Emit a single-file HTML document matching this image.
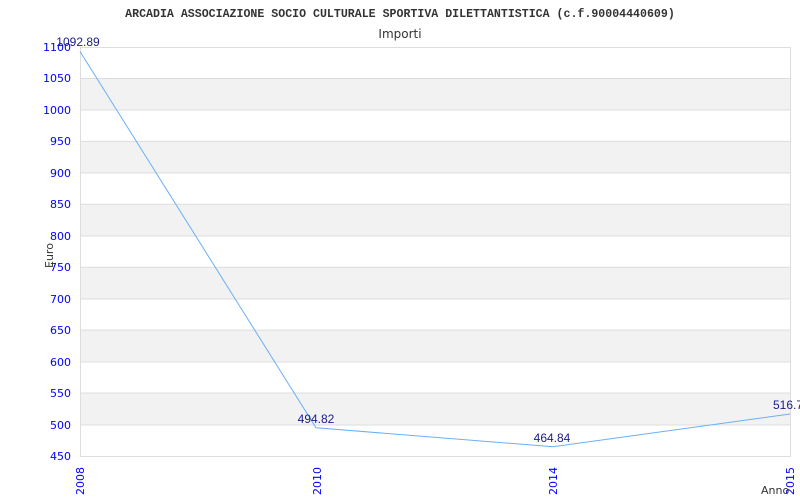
<!DOCTYPE html>
<html><head><style>body{margin:0;background:#fff}svg{display:block}</style></head><body>
<svg width="800" height="500" xmlns="http://www.w3.org/2000/svg">
<rect width="800" height="500" fill="#fff"/>
<text x="400" y="17" text-anchor="middle" font-family="Liberation Mono, monospace" font-weight="bold" font-size="11.6" fill="#333">ARCADIA ASSOCIAZIONE SOCIO CULTURALE SPORTIVA DILETTANTISTICA (c.f.90004440609)</text>
<text x="400" y="38" text-anchor="middle" font-family="DejaVu Sans, sans-serif" font-size="12" fill="#333">Importi</text>
<g fill="#f2f2f2">
<rect x="80" y="78.5" width="710" height="31.5"/>
<rect x="80" y="141.4" width="710" height="31.5"/>
<rect x="80" y="204.3" width="710" height="31.5"/>
<rect x="80" y="267.2" width="710" height="31.5"/>
<rect x="80" y="330.1" width="710" height="31.5"/>
<rect x="80" y="393" width="710" height="31.5"/>
</g>
<g stroke="#ddd" stroke-width="1">
<line x1="80" x2="790" y1="47.5" y2="47.5"/><line x1="80" x2="790" y1="78.5" y2="78.5"/><line x1="80" x2="790" y1="110" y2="110"/><line x1="80" x2="790" y1="141.4" y2="141.4"/><line x1="80" x2="790" y1="173" y2="173"/><line x1="80" x2="790" y1="204.3" y2="204.3"/><line x1="80" x2="790" y1="236" y2="236"/><line x1="80" x2="790" y1="267.2" y2="267.2"/><line x1="80" x2="790" y1="299" y2="299"/><line x1="80" x2="790" y1="330.1" y2="330.1"/><line x1="80" x2="790" y1="362" y2="362"/><line x1="80" x2="790" y1="393" y2="393"/><line x1="80" x2="790" y1="425" y2="425"/><line x1="80" x2="790" y1="456.5" y2="456.5"/>
<line x1="80.5" x2="80.5" y1="47" y2="457"/><line x1="790.5" x2="790.5" y1="47" y2="457"/>
</g>
<g font-family="DejaVu Sans, sans-serif" font-size="11" fill="#00f" text-anchor="end">
<text x="71" y="51">1100</text><text x="71" y="82">1050</text><text x="71" y="114">1000</text><text x="71" y="145">950</text><text x="71" y="177">900</text><text x="71" y="208">850</text><text x="71" y="240">800</text><text x="71" y="271">750</text><text x="71" y="303">700</text><text x="71" y="334">650</text><text x="71" y="366">600</text><text x="71" y="397">550</text><text x="71" y="429">500</text><text x="71" y="460">450</text>
</g>
<g font-family="DejaVu Sans, sans-serif" font-size="11" fill="#00f">
<text transform="translate(84,495) rotate(-90)">2008</text>
<text transform="translate(321,495) rotate(-90)">2010</text>
<text transform="translate(557,495) rotate(-90)">2014</text>
<text transform="translate(794,495) rotate(-90)">2015</text>
</g>
<text transform="translate(53,268) rotate(-90)" font-family="DejaVu Sans, sans-serif" font-size="11" fill="#333">Euro</text>
<text x="761" y="494" font-family="DejaVu Sans, sans-serif" font-size="11" fill="#333">Anno</text>
<polyline points="80,51.5 316,427.8 553,446.7 790,414" fill="none" stroke="#6ab0f5" stroke-width="1"/>
<g font-family="Liberation Sans, sans-serif" font-size="12" fill="#1a1a8c" text-anchor="middle">
<text x="78" y="46">1092.89</text><text x="316" y="423">494.82</text><text x="552" y="442">464.84</text><text x="788" y="409">516.7</text>
</g>
</svg>
</body></html>
